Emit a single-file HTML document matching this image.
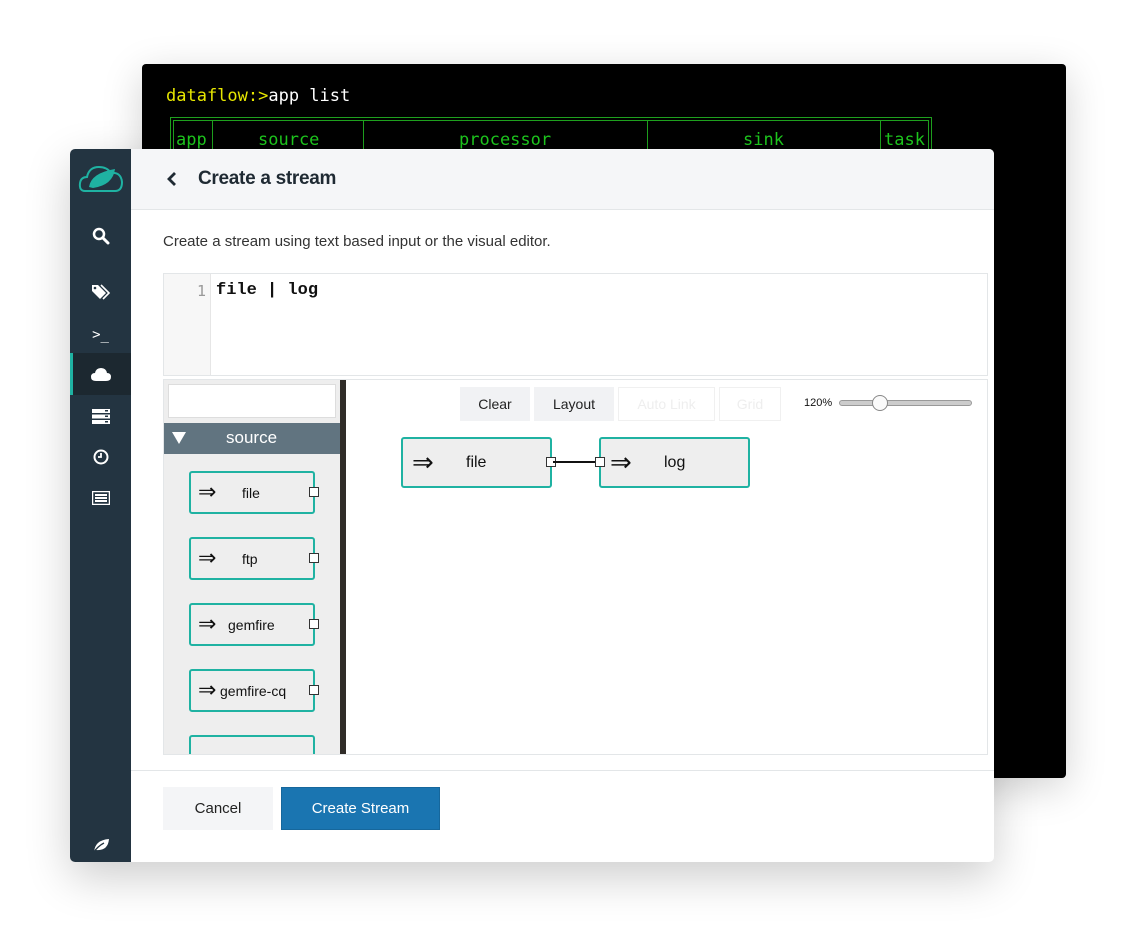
<!DOCTYPE html>
<html><head><style>
*{box-sizing:border-box;margin:0;padding:0}
body{width:1136px;height:939px;background:#fff;position:relative;overflow:hidden;font-family:"Liberation Sans",sans-serif}
.term{position:absolute;left:142px;top:64px;width:924px;height:714px;background:#000;border-radius:4px;box-shadow:0 10px 40px rgba(0,0,0,.18)}
.mono{font-family:"DejaVu Sans Mono","Liberation Mono",monospace}
.app{position:absolute;left:70px;top:149px;width:924px;height:713px;background:#fff;border-radius:5px;overflow:hidden;box-shadow:0 15px 45px rgba(0,0,0,.2)}
.side{position:absolute;left:0;top:0;width:61px;height:713px;background:#233441}
.ic{position:absolute;left:0;width:61px;display:flex;justify-content:center;align-items:center}
.hdr{position:absolute;left:61px;top:0;right:0;height:61px;background:#f5f6f8;border-bottom:1px solid #e3e6e8}
.t{position:absolute;font-family:"Liberation Sans",sans-serif;color:#1f2a33}
.node{position:absolute;border:2px solid #1fb2a2;border-radius:3px;background:#eee;font-size:14px;color:#111}
.port{position:absolute;width:10px;height:10px;border:1px solid #333;background:#fff}
.btn{position:absolute;background:#f1f2f4;font-size:14px;color:#222;display:flex;align-items:center;justify-content:center}
.ar{position:absolute;font-family:"DejaVu Sans",sans-serif}
</style></head><body>
<div class="term">
<div class="mono" style="position:absolute;left:24px;top:22px;font-size:17px;color:#e6e600">dataflow:&gt;<span style="color:#fff">app list</span></div>
<div style="position:absolute;left:28px;top:53px;width:762px;height:40px;border:1px solid #1ea01e;border-bottom:none"></div>
<div style="position:absolute;left:31px;top:56px;width:756px;height:40px;border:1px solid #1ea01e;border-bottom:none"></div>
<div style="position:absolute;left:70px;top:56px;width:1px;height:40px;background:#1ea01e"></div>
<div style="position:absolute;left:221px;top:56px;width:1px;height:40px;background:#1ea01e"></div>
<div style="position:absolute;left:505px;top:56px;width:1px;height:40px;background:#1ea01e"></div>
<div style="position:absolute;left:738px;top:56px;width:1px;height:40px;background:#1ea01e"></div>
<div class="mono" style="position:absolute;top:66px;left:34px;font-size:17px;color:#1ec81e">app</div>
<div class="mono" style="position:absolute;top:66px;left:116px;font-size:17px;color:#1ec81e">source</div>
<div class="mono" style="position:absolute;top:66px;left:317px;font-size:17px;color:#1ec81e">processor</div>
<div class="mono" style="position:absolute;top:66px;left:601px;font-size:17px;color:#1ec81e">sink</div>
<div class="mono" style="position:absolute;top:66px;left:742px;font-size:17px;color:#1ec81e">task</div>
</div>
<div class="app">
<div class="side">
 <div class="ic" style="top:12px;height:34px"><svg width="48" height="34" viewBox="0 0 48 34"><path d="M8 30 Q2 30 3 22 Q4 16 10 16 Q12 6 22 6 Q30 6 34 12 Q44 11 45 21 Q45 30 38 30 Z" fill="none" stroke="#1fb2a2" stroke-width="2"/><path d="M12 26 Q14 12 38 8 Q36 24 16 27 Z" fill="#1fb2a2"/></svg></div>
 <div class="ic" style="top:76px;height:22px"><svg width="18" height="18" viewBox="0 0 18 18"><circle cx="7" cy="7" r="5" fill="none" stroke="#fff" stroke-width="2.5"/><path d="M11 11 L16 16" stroke="#fff" stroke-width="3" stroke-linecap="round"/></svg></div>
 <div class="ic" style="top:132px;height:22px"><svg width="20" height="18" viewBox="0 0 20 18"><path d="M1 2 L1 8 L9 16 L15 10 L7 2 Z" fill="#fff"/><path d="M10 2 L18 10 L12 16" fill="none" stroke="#fff" stroke-width="1.6"/><circle cx="4" cy="5" r="1.3" fill="#233441"/></svg></div>
 <div class="ic" style="top:175px;height:22px;color:#fff;font-size:14px;font-family:'DejaVu Sans Mono',monospace">&gt;_</div>
 <div style="position:absolute;top:204px;left:0;width:61px;height:42px;background:#1c2830;border-left:3px solid #1fb2a2"></div>
 <div class="ic" style="top:214px;height:22px"><svg width="20" height="13" viewBox="0 0 20 13"><path d="M5 13 Q0 13 0 9 Q0 5 4 5 Q5 0 10 0 Q15 0 16 5 Q20 5 20 9 Q20 13 15 13 Z" fill="#fff"/></svg></div>
 <div class="ic" style="top:256px;height:22px"><svg width="18" height="15" viewBox="0 0 18 15"><rect x="0" y="0" width="18" height="4" fill="#fff"/><rect x="0" y="5.5" width="18" height="4" fill="#fff"/><rect x="0" y="11" width="18" height="4" fill="#fff"/><rect x="13" y="1" width="3" height="1.5" fill="#233441"/><rect x="13" y="6.5" width="3" height="1.5" fill="#233441"/><rect x="13" y="12" width="3" height="1.5" fill="#233441"/></svg></div>
 <div class="ic" style="top:297px;height:22px"><svg width="16" height="16" viewBox="0 0 16 16"><circle cx="8" cy="8" r="6.5" fill="none" stroke="#fff" stroke-width="2"/><path d="M8 4 V8 H5" fill="none" stroke="#fff" stroke-width="1.8"/></svg></div>
 <div class="ic" style="top:338px;height:22px"><svg width="18" height="14" viewBox="0 0 18 14"><rect x="0.5" y="0.5" width="17" height="13" fill="none" stroke="#fff" stroke-width="1.5"/><rect x="3" y="3" width="12" height="2" fill="#fff"/><rect x="3" y="6" width="12" height="2" fill="#fff"/><rect x="3" y="9" width="12" height="2" fill="#fff"/></svg></div>
 <div class="ic" style="top:686px;height:20px"><svg width="18" height="15" viewBox="0 0 18 15"><path d="M2 14 Q3 2 17 1 Q16 13 4 12" fill="#fff"/><path d="M1 15 Q6 8 12 5" stroke="#233441" stroke-width="1.3" fill="none"/></svg></div>
</div>
<div class="hdr">
 <svg style="position:absolute;left:36px;top:22px" width="10" height="16" viewBox="0 0 10 16"><path d="M8 2 L2 8 L8 14" fill="none" stroke="#1f2a33" stroke-width="2.8"/></svg>
 <div class="t" style="left:67px;top:19px;font-size:19px;font-weight:bold;letter-spacing:-.3px">Create a stream</div>
</div>
<div class="t" style="left:93px;top:84px;font-size:15px;color:#333">Create a stream using text based input or the visual editor.</div>
<div style="position:absolute;left:93px;top:124px;width:825px;height:103px;border:1px solid #e3e6e8;background:#fff">
 <div style="position:absolute;left:0;top:0;width:47px;height:101px;background:#f7f7f7;border-right:1px solid #e6e6e6"></div>
 <div class="mono" style="position:absolute;left:33px;top:8px;font-size:15px;color:#999">1</div>
 <div style="position:absolute;left:52px;top:7px;font-size:17px;font-weight:bold;font-family:'Liberation Mono',monospace;color:#111">file | log</div>
</div>
<div style="position:absolute;left:93px;top:230px;width:825px;height:376px;border:1px solid #e3e6e8;background:#fff;overflow:hidden">
 <div style="position:absolute;left:0;top:0;width:176px;height:374px;background:#eee"></div>
 <div style="position:absolute;left:4px;top:4px;width:168px;height:34px;background:#fff;border:1px solid #ddd"></div>
 <div style="position:absolute;left:0;top:43px;width:176px;height:31px;background:#617480;color:#fff;font-size:17px">
  <svg style="position:absolute;left:8px;top:9px" width="14" height="12"><path d="M0 0 H14 L7 12 Z" fill="#fff"/></svg>
  <div style="position:absolute;left:62px;top:5px">source</div></div>
 <div style="position:absolute;left:176px;top:0;width:6px;height:374px;background:#302c28"></div>
 <div class="node" style="left:25px;top:91px;width:126px;height:43px"><span class="ar" style="left:7px;top:7px;font-size:22px">⇒</span><span style="position:absolute;left:51px;top:12px">file</span><div class="port" style="left:118px;top:14px"></div></div>
 <div class="node" style="left:25px;top:157px;width:126px;height:43px"><span class="ar" style="left:7px;top:7px;font-size:22px">⇒</span><span style="position:absolute;left:51px;top:12px">ftp</span><div class="port" style="left:118px;top:14px"></div></div>
 <div class="node" style="left:25px;top:223px;width:126px;height:43px"><span class="ar" style="left:7px;top:7px;font-size:22px">⇒</span><span style="position:absolute;left:37px;top:12px">gemfire</span><div class="port" style="left:118px;top:14px"></div></div>
 <div class="node" style="left:25px;top:289px;width:126px;height:43px"><span class="ar" style="left:7px;top:7px;font-size:22px">⇒</span><span style="position:absolute;left:29px;top:12px">gemfire-cq</span><div class="port" style="left:118px;top:14px"></div></div>
 <div class="node" style="left:25px;top:355px;width:126px;height:30px"></div>
 <div class="btn" style="left:296px;top:7px;width:70px;height:34px">Clear</div>
 <div class="btn" style="left:370px;top:7px;width:80px;height:34px">Layout</div>
 <div class="btn" style="left:454px;top:7px;width:97px;height:34px;background:#fff;border:1px solid #f0f0f0;color:#eee">Auto Link</div>
 <div class="btn" style="left:555px;top:7px;width:62px;height:34px;background:#fff;border:1px solid #f0f0f0;color:#eee">Grid</div>
 <div style="position:absolute;left:640px;top:17px;font-size:11px;color:#111">120%</div>
 <div style="position:absolute;left:675px;top:20px;width:133px;height:6px;border:1px solid #999;border-radius:3px;background:#ccc"></div>
 <div style="position:absolute;left:708px;top:15px;width:16px;height:16px;border:1px solid #888;border-radius:50%;background:#fafafa"></div>
 <div class="node" style="left:237px;top:57px;width:151px;height:51px"><span class="ar" style="left:9px;top:9px;font-size:26px">⇒</span><span style="position:absolute;left:63px;top:15px;font-size:16px">file</span><div class="port" style="left:143px;top:18px"></div></div>
 <div style="position:absolute;left:389px;top:81px;width:46px;height:2px;background:#111"></div>
 <div class="node" style="left:435px;top:57px;width:151px;height:51px"><span class="ar" style="left:9px;top:9px;font-size:26px">⇒</span><span style="position:absolute;left:63px;top:15px;font-size:16px">log</span><div class="port" style="left:-6px;top:18px"></div></div>
</div>
<div style="position:absolute;left:61px;top:621px;right:0;height:1px;background:#e3e6e8"></div>
<div class="btn" style="left:93px;top:638px;width:110px;height:43px;background:#f4f5f7;font-size:15px">Cancel</div>
<div class="btn" style="left:211px;top:638px;width:159px;height:43px;background:#1a75b1;color:#fff;font-size:15px;border:1px solid #16679c">Create Stream</div>
</div>
</body></html>
